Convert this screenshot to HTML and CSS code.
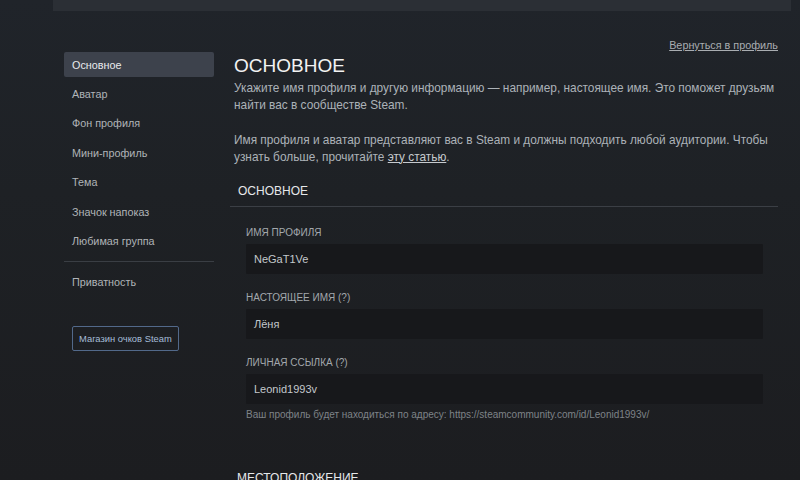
FILE: index.html
```html
<!DOCTYPE html>
<html lang="ru">
<head>
<meta charset="utf-8">
<link rel="stylesheet" href="styles.css">
</head>
<body>
<div class="page">
  <div class="topbar"></div>
  <div class="backrow"><a class="backlink" href="#">Вернуться в профиль</a></div>
  <div class="layout">
    <nav class="sidenav">
      <a class="navitem active">Основное</a>
      <a class="navitem">Аватар</a>
      <a class="navitem">Фон профиля</a>
      <a class="navitem">Мини-профиль</a>
      <a class="navitem">Тема</a>
      <a class="navitem">Значок напоказ</a>
      <a class="navitem">Любимая группа</a>
      <div class="navdivider"></div>
      <a class="navitem">Приватность</a>
      <a class="pointsbtn">Магазин очков Steam</a>
    </nav>
    <main class="content">
      <h1 class="title">ОСНОВНОЕ</h1>
      <p class="desc">Укажите имя профиля и другую информацию — например, настоящее имя. Это поможет друзьям найти вас в сообществе Steam.</p>
      <p class="desc">Имя профиля и аватар представляют вас в Steam и должны подходить любой аудитории. Чтобы узнать больше, прочитайте <a class="inlink" href="#">эту статью</a>.</p>
      <h2 class="section">ОСНОВНОЕ</h2>
      <div class="fields">
        <div class="field">
          <div class="label">ИМЯ ПРОФИЛЯ</div>
          <div class="input">NeGaT1Ve</div>
        </div>
        <div class="field">
          <div class="label">НАСТОЯЩЕЕ ИМЯ (?)</div>
          <div class="input">Лёня</div>
        </div>
        <div class="field">
          <div class="label">ЛИЧНАЯ ССЫЛКА (?)</div>
          <div class="input">Leonid1993v</div>
          <div class="hint">Ваш профиль будет находиться по адресу: https://steamcommunity.com/id/Leonid1993v/</div>
        </div>
      </div>
      <h2 class="section section2">МЕСТОПОЛОЖЕНИЕ</h2>
    </main>
  </div>
</div>
</body>
</html>
```
FILE: styles.css
```css
html, body {
  margin: 0;
  padding: 0;
}
body {
  width: 800px;
  height: 480px;
  overflow: hidden;
  background: linear-gradient(180deg, #20242a 0%, #1e2125 40%, #1c1d20 100%);
  font-family: "Liberation Sans", Arial, sans-serif;
  color: #b8bcbf;
}
.page {
  padding: 0 9px 0 53px;
}
.topbar {
  height: 11px;
  background: #2b2f35;
}
.backrow {
  display: flex;
  justify-content: flex-end;
  padding: 26px 13px 0 0;
  height: 15px;
}
.backlink {
  font-size: 10.8px;
  color: #a9adb1;
  text-decoration: underline;
  line-height: 15px;
  margin-top: 1px;
}
.layout {
  display: flex;
  padding-left: 11px;
}
.sidenav {
  width: 150px;
  flex: none;
  display: flex;
  flex-direction: column;
}
.navitem {
  display: block;
  font-size: 10.8px;
  color: #b0b4b8;
  padding: 7px 8px;
  height: 15.4px;
  line-height: 15px;
}
.navitem.active {
  background: #3d424c;
  color: #e8eaec;
  border-radius: 2px;
  margin-bottom: 3px;
  padding: 6px 8px;
  height: 13px;
}
.navdivider {
  height: 1px;
  background: #3a3e44;
  margin: 5px 0 6px;
}
.pointsbtn {
  align-self: flex-start;
  margin: 28px 0 0 8px;
  font-size: 9.4px;
  color: #a6bdd8;
  border: 1px solid #52698a;
  border-radius: 2px;
  padding: 6px 6px;
  line-height: 11px;
}
.content {
  flex: 1;
  padding: 0 13px 0 20px;
}
.title {
  margin: 0;
  font-size: 19px;
  font-weight: normal;
  color: #f2f2f2;
  line-height: 28px;
}
.desc {
  margin: 0 0 19px;
  font-size: 11.85px;
  line-height: 16.5px;
  color: #acb2b8;
}
.inlink {
  color: #c6cace;
  text-decoration: underline;
}
.section {
  margin: 0 0 0 -4px;
  font-size: 12px;
  font-weight: normal;
  color: #e6e8ea;
  padding: 0 0 8px 8px;
  border-bottom: 1px solid #3b3f45;
  line-height: 14px;
}
.section2 {
  border-bottom: none;
  margin-top: 50px;
  padding-left: 7px;
}
.fields {
  padding: 20px 15px 0 12px;
  display: flex;
  flex-direction: column;
  gap: 18px;
}
.label {
  font-size: 10px;
  color: #a3a8ad;
  line-height: 12px;
  margin-bottom: 5px;
}
.input {
  background: #17181b;
  height: 30px;
  line-height: 30px;
  font-size: 11px;
  color: #c4c8cc;
  padding-left: 8px;
  border-radius: 1px;
}
.hint {
  font-size: 10px;
  color: #7e8388;
  margin-top: 5px;
  line-height: 12px;
}
```
